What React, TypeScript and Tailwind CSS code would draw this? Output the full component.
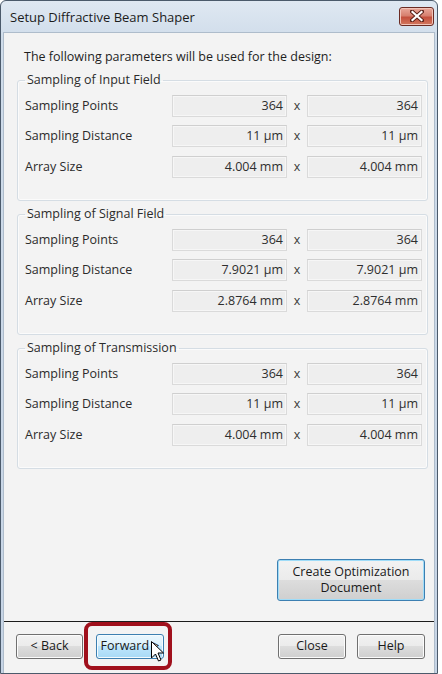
import React from "react";

const font = { fontFamily: '"Open Sans", "Noto Sans", sans-serif' };

const groups = [
  {
    title: "Sampling of Input Field",
    rows: [
      ["Sampling Points", "364", "364"],
      ["Sampling Distance", "11 µm", "11 µm"],
      ["Array Size", "4.004 mm", "4.004 mm"],
    ],
  },
  {
    title: "Sampling of Signal Field",
    rows: [
      ["Sampling Points", "364", "364"],
      ["Sampling Distance", "7.9021 µm", "7.9021 µm"],
      ["Array Size", "2.8764 mm", "2.8764 mm"],
    ],
  },
  {
    title: "Sampling of Transmission",
    rows: [
      ["Sampling Points", "364", "364"],
      ["Sampling Distance", "11 µm", "11 µm"],
      ["Array Size", "4.004 mm", "4.004 mm"],
    ],
  },
];

const btn =
  "h-[25px] rounded-[3px] border border-[#707070] text-[12.5px] text-[#1a1a1a] bg-[linear-gradient(#f2f2f2,#ebebeb_50%,#dddddd_50%,#cfcfcf)] shadow-[inset_0_0_0_1px_#fcfcfc]";

const Field = ({ value }: { value: string }) => (
  <div className="w-[115px] h-[22px] flex items-center justify-end pr-[3px] border border-[#dadada] border-t-[#cfcfcf] bg-[#eeeeee] shadow-[inset_0_0_0_1px_#f6f6f6] text-[12.5px] text-[#2e2e2e]">
    {value}
  </div>
);

const Group = ({ title, rows }: { title: string; rows: string[][] }) => (
  <fieldset className="border border-[#d5dde4] rounded-[3px] pl-[7px] pr-[4px] pb-[22px] shadow-[inset_0_0_0_1px_#fbfbfb]">
    <legend className="px-[2px] h-[16px] leading-[16px] text-[12.5px] text-[#2b2b2b]">
      {title}
    </legend>
    <div className="flex flex-col gap-[8px] pt-[7px]">
      {rows.map(([label, a, b], i) => (
        <div key={label} className={`flex items-center h-[22px] ${i === 2 ? "mt-[1px]" : ""}`}>
          <span className="w-[147px] text-[12.5px] text-[#2b2b2b]">{label}</span>
          <Field value={a} />
          <span className="w-[20px] text-center text-[12.5px] text-[#3a3a3a]">x</span>
          <Field value={b} />
        </div>
      ))}
    </div>
  </fieldset>
);

export default function App() {
  return (
    <div className="w-[442px] h-[674px] bg-white relative overflow-hidden" style={font}>
      <div className="w-[438px] h-[674px] flex flex-col border border-[#4b5a6b] rounded-t-[6px] bg-[linear-gradient(#dfe8f2,#cfdcea_40px,#c6d4e5)]">
        {/* title bar */}
        <div className="h-[31px] shrink-0 flex items-center justify-between pl-[9px] pr-[3px]">
          <span className="text-[13px] text-[#1c1c1c] pt-[2px]">Setup Diffractive Beam Shaper</span>
          <div className="w-[35px] h-[19px] mb-[1px] flex items-center justify-center rounded-[3px] border border-[#6b2b23] bg-[linear-gradient(#e9a99b,#d7806f_45%,#c4503d_55%,#d2785f)] shadow-[inset_0_0_0_1px_#f2c3b8]">
            <svg width="14" height="12" viewBox="0 0 14 12">
              <path d="M2 1.5 L12 10.5 M12 1.5 L2 10.5" stroke="#5a2118" strokeWidth="4" strokeLinecap="square" />
              <path d="M2.5 2 L11.5 10 M11.5 2 L2.5 10" stroke="#ffffff" strokeWidth="2.2" strokeLinecap="square" />
            </svg>
          </div>
        </div>

        {/* client area */}
        <div className="flex-1 mx-[2px] flex flex-col bg-[#f3f3f3] border-x border-t border-[#aebccb]">
          <div className="flex flex-col pl-[13px] pr-[6px] pt-[16px]">
            <p className="ml-[7px] h-[16px] leading-[16px] text-[12.5px] text-[#1e1e1e]">
              The following parameters will be used for the design:
            </p>
            <div className="flex flex-col gap-[5px] mt-[7px]">
              {groups.map((g) => (
                <Group key={g.title} title={g.title} rows={g.rows} />
              ))}
            </div>
          </div>

          <div className="flex-1" />

          <div className="flex justify-end pr-[9px] mb-[20px]">
            <button className="w-[148px] h-[42px] flex flex-col items-center justify-center rounded-[3px] border border-[#3c7fb1] text-[12.5px] leading-[16px] text-[#1a1a1a] bg-[linear-gradient(#f2f2f2,#ebebeb_50%,#dddddd_50%,#cfcfcf)] shadow-[inset_0_0_0_1px_#9fdcf8]">
              <span>Create Optimization</span>
              <span>Document</span>
            </button>
          </div>

          <div className="h-px bg-[#1c1c1c]" />

          <div className="flex items-center pl-[12px] pr-[9px] pt-[12px] pb-[14px]">
            <button className={`${btn} w-[67px]`}>&lt; Back</button>
            <button className="ml-[13px] w-[68px] h-[25px] rounded-[3px] border border-[#3c7fb1] text-[12.5px] text-[#1a1a1a] bg-[linear-gradient(#eaf6fd,#d9f0fc_50%,#bee6fd_50%,#a7d9f5)] shadow-[inset_0_0_0_1px_#f4fbfe]">
              Forward &gt;
            </button>
            <div className="flex-1" />
            <button className={`${btn} w-[68px]`}>Close</button>
            <button className={`${btn} w-[68px] ml-[11px]`}>Help</button>
          </div>
        </div>
      </div>

      {/* annotation highlight */}
      <div className="absolute left-[84px] top-[622px] w-[88px] h-[48px] rounded-[8px] border-[4px] border-[#a0101c]" />
      {/* mouse cursor */}
      <svg className="absolute left-[151px] top-[641px]" width="14" height="22" viewBox="0 0 14 22">
        <path d="M0.5 0.5 L0.5 17 L4.5 13 L7.5 20 L10 19 L7 12 L12.5 12 Z" fill="#ffffff" stroke="#000000" strokeWidth="1" strokeLinejoin="miter" />
      </svg>
    </div>
  );
}
